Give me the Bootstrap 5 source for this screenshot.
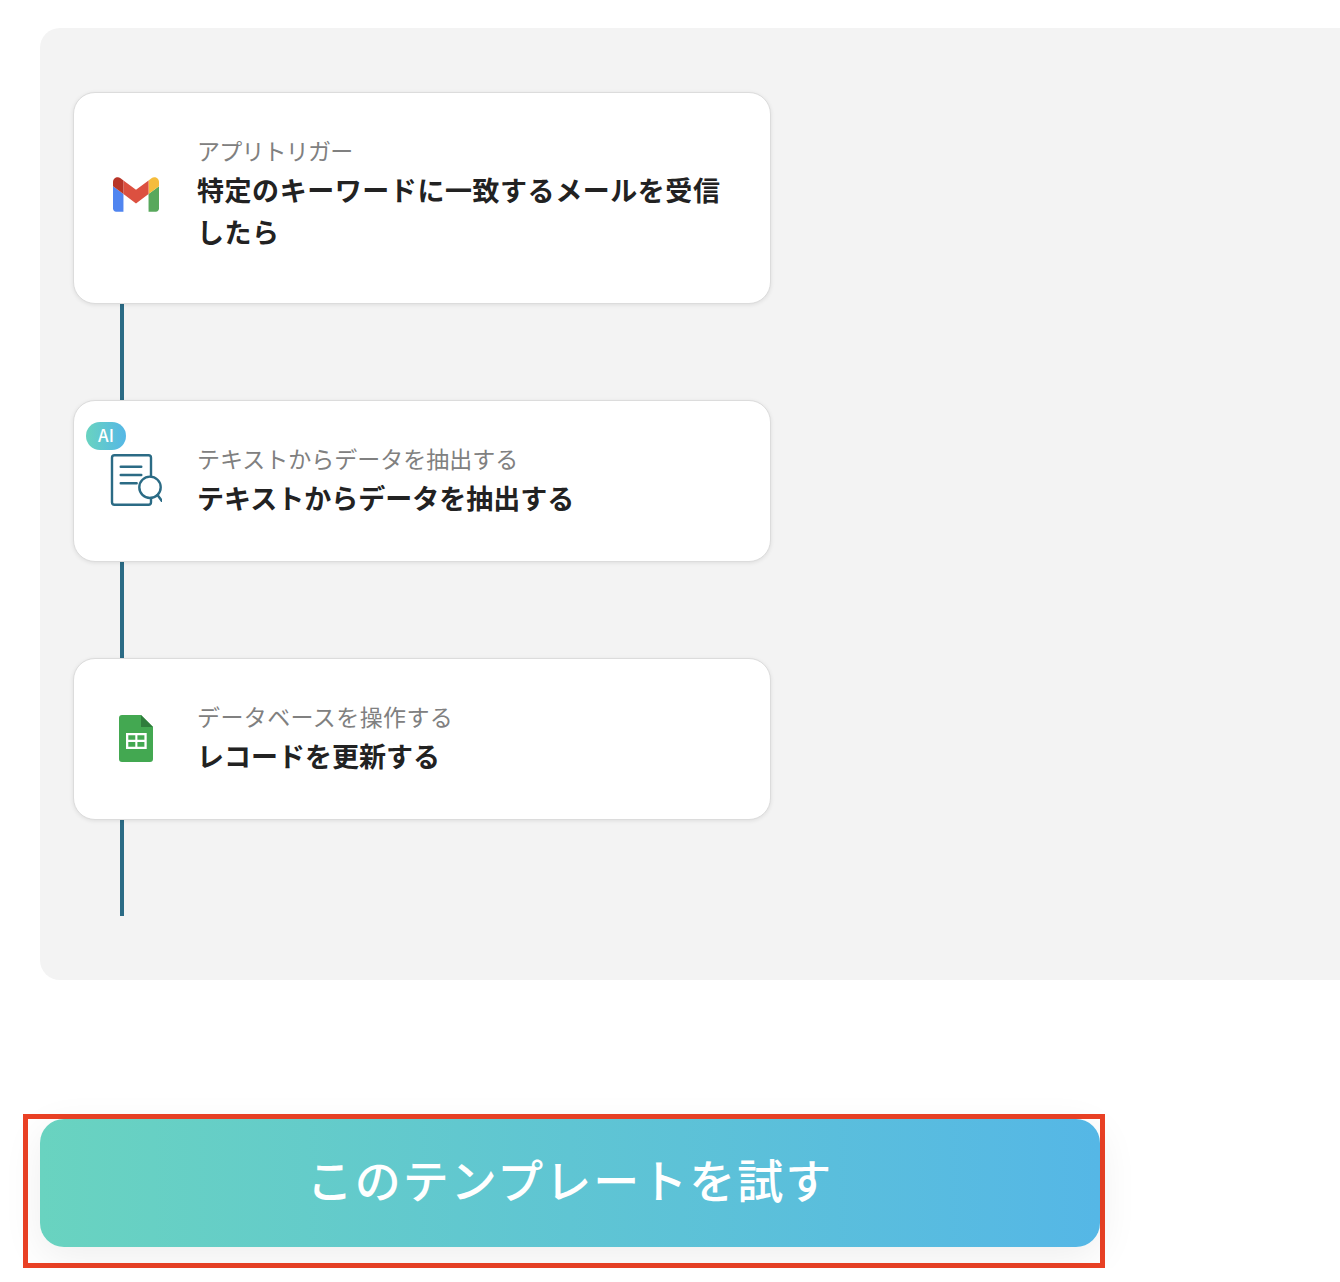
<!DOCTYPE html>
<html lang="ja">
<head>
  <meta charset="UTF-8" />
  <meta name="viewport" content="width=device-width, initial-scale=1.0" />
  <title>フローボット テンプレート</title>
  <link href="https://cdn.jsdelivr.net/npm/bootstrap@5.3.0/dist/css/bootstrap.min.css" rel="stylesheet">
  <style>
    body { background-color: #fff; font-family: "Noto Sans CJK JP", "Liberation Sans", sans-serif; overflow-x: hidden; }
    .flow-panel { margin: 28px 0 0 40px; height: 952px; padding: 64px 0 0 33px; background-color: #f3f3f3; border-radius: 20px 0 0 20px; }
    .step-card { width: 698px; padding: 41px 38px 42px 37px; background-color: #fff; border: 1px solid #dcdcdc; border-radius: 22px; box-shadow: 0 1px 4px rgba(0, 0, 0, .09); }
    .step-wrapped { padding-bottom: 50px; }
    .step-wrapped .step-title { letter-spacing: .55px; }
    .step-wrapped .step-sub { letter-spacing: -.8px; }
    .step-icon { width: 50px; flex-shrink: 0; margin-right: 36px; }
    .step-icon svg { flex-shrink: 0; }
    .gmail-mark { margin-top: 2px; }
    .step-sub { margin: -2px 0 1px; font-size: 23px; line-height: 36px; color: #808080; }
    .step-sub-wide { letter-spacing: .4px; }
    .step-title { font-size: 27px; line-height: 42px; font-weight: 700; color: #222; }
    .step-line { width: 4px; height: 96px; margin-left: 47px; background-color: #2b6b85; }
    .ai-tag { position: absolute; left: 12px; top: 21px; width: 40px; height: 28px; border-radius: 14px; background: linear-gradient(90deg, #69d3c0, #55b7e6); color: #fff; font-size: 17px; font-weight: 500; line-height: 26px; text-align: center; }
    .cta-frame { width: 1082px; height: 154px; margin: 134px 0 0 23px; padding: 0 0 0 12px; border: 5px solid #ea4125; }
    .cta-btn { width: 100%; height: 128px; padding: 0 0 10px; border: 0; border-radius: 24px; background: linear-gradient(90deg, #69d3c0, #55b7e6); color: #fff; font-size: 46px; font-weight: 500; letter-spacing: 2px; box-shadow: 0 10px 40px rgba(0, 0, 0, .07); }
    .cta-btn:hover { color: #fff; }
  </style>
</head>
<body>
  <main>
    <section class="flow-panel">
      <div class="card step-card step-wrapped flex-row align-items-center">
        <div class="step-icon d-flex justify-content-center">
          <svg class="gmail-mark" width="46" height="35" viewBox="52 42 88 66" aria-hidden="true">
            <path fill="#5085f0" d="M58 108h14V74L52 59v43c0 3.32 2.69 6 6 6"/>
            <path fill="#58a85c" d="M120 108h14c3.32 0 6-2.69 6-6V59l-20 15"/>
            <path fill="#f5bc3c" d="M120 48v26l20-15v-8c0-7.42-8.47-11.65-14.4-7.2"/>
            <path fill="#dc5040" d="M72 74V48l24 18 24-18v26L96 92"/>
            <path fill="#b83528" d="M52 51v8l20 15V48l-5.6-4.2c-5.94-4.45-14.4-.22-14.4 7.2"/>
          </svg>
        </div>
        <div>
          <div class="step-sub">アプリトリガー</div>
          <div class="step-title">特定のキーワードに一致するメールを受信したら</div>
        </div>
      </div>
      <div class="step-line"></div>

      <div class="card step-card flex-row align-items-center">
        <span class="ai-tag">AI</span>
        <div class="step-icon d-flex justify-content-center">
          <svg width="52" height="56" viewBox="0 0 52 56" fill="none" stroke="#2b6b85" stroke-width="2.4" stroke-linecap="round" stroke-linejoin="round" aria-hidden="true">
            <path d="M41 23.500V4.700A2.500 2.500 0 0 0 38.500 2.200H4.500A2.500 2.500 0 0 0 2 4.700v44.600A2.500 2.500 0 0 0 4.500 51.800h34a2.500 2.500 0 0 0 2.500-2.500V45"/>
            <path d="M10.700 13.700h20.600M10.700 22h20.600M10.700 30.300h16"/>
            <circle cx="40" cy="34.300" r="10.700"/>
            <path d="M47.500 42l4.200 5.700"/>
          </svg>
        </div>
        <div>
          <div class="step-sub">テキストからデータを抽出する</div>
          <div class="step-title">テキストからデータを抽出する</div>
        </div>
      </div>
      <div class="step-line"></div>

      <div class="card step-card flex-row align-items-center">
        <div class="step-icon d-flex justify-content-center">
          <svg width="34" height="47" viewBox="0 0 34 47" aria-hidden="true">
            <path fill="#43a851" d="M22 0H3a3 3 0 0 0-3 3v41a3 3 0 0 0 3 3h28a3 3 0 0 0 3-3V12z"/>
            <path fill="#2f7d3c" d="M22 0l12 12H22z"/>
            <path fill="#fff" fill-rule="evenodd" d="M7 18h20.700v16H7zM9.300 20.300v4.400h7v-4.400zM18.400 20.300v4.400h7v-4.400zM9.300 27v4.700h7V27zM18.400 27v4.700h7V27z"/>
          </svg>
        </div>
        <div>
          <div class="step-sub step-sub-wide">データベースを操作する</div>
          <div class="step-title">レコードを更新する</div>
        </div>
      </div>
      <div class="step-line"></div>
    </section>

    <div class="cta-frame">
      <button type="button" class="btn cta-btn">このテンプレートを試す</button>
    </div>
  </main>
  <script src="https://cdn.jsdelivr.net/npm/bootstrap@5.3.0/dist/js/bootstrap.bundle.min.js"></script>
</body>
</html>
